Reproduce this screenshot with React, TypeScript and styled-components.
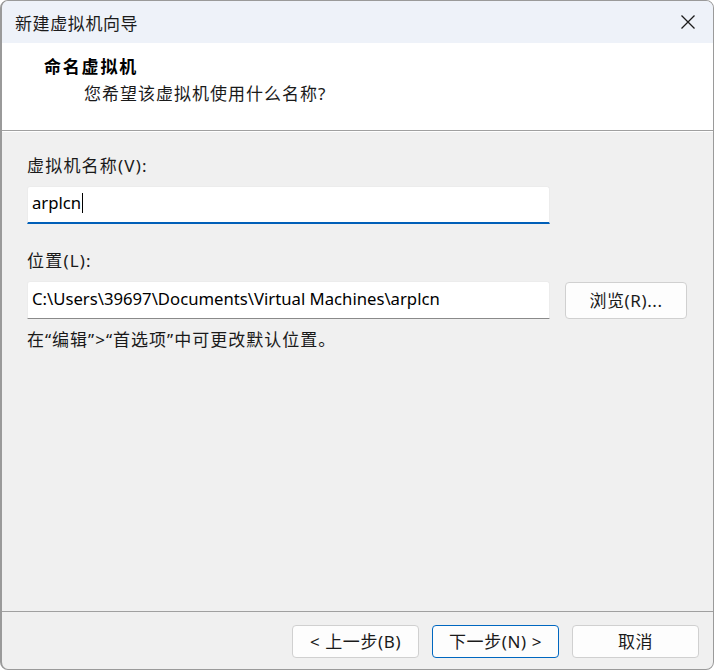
import styled, { createGlobalStyle } from 'styled-components';

const Global = createGlobalStyle`
  html, body {
    margin: 0;
    padding: 0;
    background: #ffffff;
  }
  body {
    font-family: "Noto Sans", "Noto Sans CJK SC", sans-serif;
    font-size: 17px;
    color: #1a1a1a;
  }
`;

const Window = styled.div`
  width: 714px;
  height: 670px;
  box-sizing: border-box;
  border: 1px solid #9a9a9a;
  border-left-width: 2px;
  border-radius: 8px;
  overflow: hidden;
  display: flex;
  flex-direction: column;
  background: #f0f0f0;
`;

const TitleBar = styled.div`
  height: 42px;
  flex: none;
  background: #eef2f9;
  display: flex;
  align-items: center;
  justify-content: space-between;
  padding: 0 16px 0 13px;
`;

const TitleText = styled.span`
  font-size: 17px;
  letter-spacing: 0.6px;
  color: #1b1b1b;
`;

const CloseBtn = styled.div`
  width: 18px;
  height: 18px;
  display: flex;
  align-items: center;
  justify-content: center;
`;

const Header = styled.div`
  height: 88px;
  flex: none;
  background: #ffffff;
  border-bottom: 1px solid #a0a0a0;
  padding: 11px 0 0 42px;
  box-sizing: border-box;
`;

const HeaderTitle = styled.div`
  font-family: "Noto Sans CJK SC", sans-serif;
  font-weight: 700;
  font-size: 17px;
  letter-spacing: 1.8px;
  line-height: 24px;
  color: #000;
`;

const HeaderSub = styled.div`
  font-family: "Noto Sans", "Noto Sans CJK SC", sans-serif;
  font-size: 17px;
  letter-spacing: 1px;
  line-height: 24px;
  margin: 4px 0 0 40px;
  color: #1a1a1a;
`;

const Body = styled.div`
  flex: 1;
  padding: 23px 0 0 25px;
  border-top: 1px solid #ffffff;
`;

const Label = styled.div`
  font-size: 17px;
  letter-spacing: 1.2px;
  line-height: 22px;
  color: #1a1a1a;
  margin-bottom: 9px;
`;

const Row = styled.div`
  display: flex;
  align-items: center;
  gap: 15px;
`;

const Field = styled.div<{ $focused?: boolean }>`
  width: 523px;
  height: 38px;
  box-sizing: border-box;
  background: #ffffff;
  border: 1px solid #ececec;
  border-bottom: ${(p) => (p.$focused ? '2px solid #005fb8' : '1px solid #8a8a8a')};
  border-radius: 3px 3px 0 0;
  display: flex;
  align-items: center;
  padding: 0 4px 4px 4px;
  font-size: 16.7px;
  color: #000;
  white-space: nowrap;
`;

const Caret = styled.span`
  display: inline-block;
  width: 1px;
  height: 20px;
  background: #000;
  margin-left: 1px;
`;

const Gap = styled.div<{ $h: number }>`
  height: ${(p) => p.$h}px;
`;

const Hint = styled.div`
  font-size: 17px;
  letter-spacing: 1px;
  line-height: 22px;
  margin-top: 10px;
  color: #1a1a1a;
`;

const Footer = styled.div`
  flex: none;
  height: 58px;
  box-sizing: border-box;
  border-top: 1px solid #a0a0a0;
  display: flex;
  justify-content: flex-end;
  align-items: flex-start;
  padding: 13px 14px 0 0;
  gap: 13px;
`;

const Button = styled.button<{ $primary?: boolean; $w?: number; $h?: number }>`
  width: ${(p) => p.$w ?? 127}px;
  height: ${(p) => p.$h ?? 33}px;
  box-sizing: border-box;
  border-radius: 4px;
  background: #fdfdfd;
  border: 1px solid ${(p) => (p.$primary ? '#0067c0' : '#d0d0d0')};
  font-family: "Noto Sans", "Noto Sans CJK SC", sans-serif;
  font-size: 17px;
  letter-spacing: 0.6px;
  color: #1a1a1a;
  padding: 0 0 2px;
  display: flex;
  align-items: center;
  justify-content: center;
`;

export default function App() {
  return (
    <>
      <Global />
      <Window>
        <TitleBar>
          <TitleText>新建虚拟机向导</TitleText>
          <CloseBtn>
            <svg width="16" height="16" viewBox="0 0 16 16">
              <path d="M1.5 1.5 L14.5 14.5 M14.5 1.5 L1.5 14.5" stroke="#1b1b1b" strokeWidth="1.3" fill="none" />
            </svg>
          </CloseBtn>
        </TitleBar>
        <Header>
          <HeaderTitle>命名虚拟机</HeaderTitle>
          <HeaderSub>您希望该虚拟机使用什么名称?</HeaderSub>
        </Header>
        <Body>
          <Label>虚拟机名称(V):</Label>
          <Field $focused>
            arplcn
            <Caret />
          </Field>
          <Gap $h={26} />
          <Label>位置(L):</Label>
          <Row>
            <Field>C:\Users\39697\Documents\Virtual Machines\arplcn</Field>
            <Button $w={122} $h={37}>浏览(R)...</Button>
          </Row>
          <Hint>在“编辑”&gt;“首选项”中可更改默认位置。</Hint>
        </Body>
        <Footer>
          <Button>&lt; 上一步(B)</Button>
          <Button $primary>下一步(N) &gt;</Button>
          <Button>取消</Button>
        </Footer>
      </Window>
    </>
  );
}
